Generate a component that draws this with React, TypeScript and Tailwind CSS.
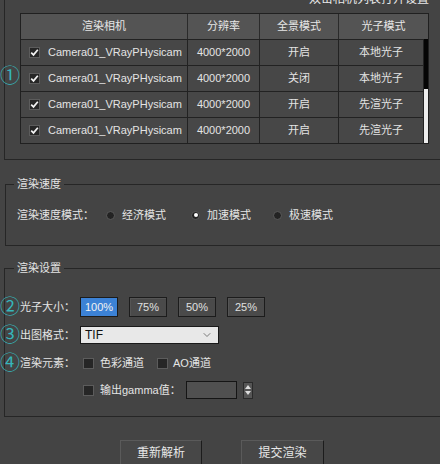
import { ChevronDown } from 'lucide-react';

const FONT = { fontFamily: '"Liberation Sans", "Noto Sans CJK SC", sans-serif' };

const cameras = [
  { name: 'Camera01_VRayPHysicam', res: '4000*2000', pano: '开启', photon: '本地光子' },
  { name: 'Camera01_VRayPHysicam', res: '4000*2000', pano: '关闭', photon: '本地光子' },
  { name: 'Camera01_VRayPHysicam', res: '4000*2000', pano: '开启', photon: '先渲光子' },
  { name: 'Camera01_VRayPHysicam', res: '4000*2000', pano: '开启', photon: '先渲光子' },
];

function CheckBox({ checked }: { checked?: boolean }) {
  return (
    <span className="flex w-[11px] h-[11px] shrink-0 items-center justify-center border border-[#5c5c5c] bg-[#262626]">
      {checked && (
        <svg width="9" height="9" viewBox="0 0 9 9">
          <path d="M1.2 4.6 L3.5 6.9 L7.8 1.8" fill="none" stroke="#f2f2f2" strokeWidth="1.7" />
        </svg>
      )}
    </span>
  );
}

function Radio({ checked, label }: { checked?: boolean; label: string }) {
  return (
    <div className="flex items-center">
      <span className="flex w-[9px] h-[9px] items-center justify-center rounded-full border border-[#5a5a5a] bg-[#232323]">
        {checked && <span className="w-[4px] h-[4px] rounded-full bg-white" />}
      </span>
      <span className="ml-[7px]">{label}</span>
    </div>
  );
}

function Circled({ ch, top }: { ch: string; top: string }) {
  return (
    <span
      className={`absolute left-0 ${top} text-[20px] leading-none text-[#36b6bb]`}
      style={{ fontFamily: '"Noto Sans CJK SC", sans-serif' }}
    >
      {ch}
    </span>
  );
}

export default function App() {
  return (
    <div
      className="relative w-[440px] h-[464px] overflow-hidden bg-[#444444] text-[11px] text-[#e4e4e4]"
      style={FONT}
    >
      {/* camera list */}
      <div className="ml-[4px] w-[460px] h-[168px] border-l border-b border-[#262626]">
        <div className="h-[13px] pl-[304px] leading-[14px] -mt-[8px] text-[12px] text-[#e8e8e8]">双击相机列表打开设置</div>
        <div className="ml-[15px] mt-[8px] w-[409px] border border-[#202020]">
          <div className="flex h-[25px] bg-[#545454] text-[#e6e6e6]">
            <div className="flex w-[167px] items-center justify-center border-r border-[#2a2a2a]">渲染相机</div>
            <div className="flex w-[72px] items-center justify-center border-r border-[#2a2a2a]">分辨率</div>
            <div className="flex w-[79px] items-center justify-center border-r border-[#2a2a2a]">全景模式</div>
            <div className="flex flex-1 items-center justify-center">光子模式</div>
          </div>
          <div className="flex">
            <div className="flex-1">
              {cameras.map((c, i) => (
                <div key={i} className="flex h-[26px] border-t border-[#222222] bg-[#474747]">
                  <div className="flex w-[167px] items-center gap-[8px] pl-[8px] border-r border-[#222222]">
                    <CheckBox checked />
                    <span>{c.name}</span>
                  </div>
                  <div className="flex w-[72px] items-center justify-center border-r border-[#222222]">{c.res}</div>
                  <div className="flex w-[79px] items-center justify-center border-r border-[#222222]">{c.pano}</div>
                  <div className="flex flex-1 items-center justify-center border-r border-[#222222]">{c.photon}</div>
                </div>
              ))}
            </div>
            <div className="flex w-[4px] flex-col">
              <div className="h-[50px] bg-[#050505]" />
              <div className="flex-1 bg-[#eeeeee]" />
            </div>
          </div>
        </div>
      </div>

      {/* render speed */}
      <fieldset className="ml-[5px] mt-[17px] w-[460px] h-[69px] border border-[#262626]">
        <legend className="ml-[8px] px-[3px] leading-[14px] text-[#e4e4e4]">渲染速度</legend>
        <div className="flex items-center pl-[11px] pt-[16px] h-[32px]">
          <span>渲染速度模式：</span>
          <div className="ml-[12px]"><Radio label="经济模式" /></div>
          <div className="ml-[25px]"><Radio checked label="加速模式" /></div>
          <div className="ml-[22px]"><Radio label="极速模式" /></div>
        </div>
      </fieldset>

      {/* render settings */}
      <fieldset className="ml-[4px] mt-[15px] w-[460px] h-[156px] border border-[#262626]">
        <legend className="ml-[9px] px-[3px] leading-[14px] text-[#e4e4e4]">渲染设置</legend>
        <div className="pl-[15px] pt-[18px]">
          <div className="flex h-[28px] items-center">
            <span className="w-[60px]">光子大小：</span>
            <div className="flex gap-[11px]">
              <button className="w-[38px] h-[20px] border border-[#1c1c1c] bg-[#3c82d6] text-[#f2f2f2]">100%</button>
              <button className="w-[38px] h-[20px] border border-[#1c1c1c] bg-[#4a4a4a] text-[#e0e0e0] shadow-[inset_1px_1px_0_#555]">75%</button>
              <button className="w-[38px] h-[20px] border border-[#1c1c1c] bg-[#4a4a4a] text-[#e0e0e0] shadow-[inset_1px_1px_0_#555]">50%</button>
              <button className="w-[38px] h-[20px] border border-[#1c1c1c] bg-[#4a4a4a] text-[#e0e0e0] shadow-[inset_1px_1px_0_#555]">25%</button>
            </div>
          </div>
          <div className="flex h-[28px] items-center">
            <span className="w-[60px]">出图格式：</span>
            <div className="flex w-[139px] h-[18px] items-center justify-between border border-[#1a1a1a] bg-[#e8e8e8] pl-[4px] pr-[5px] text-[12px] text-[#111]">
              <span className="leading-none">TIF</span>
              <ChevronDown size={12} strokeWidth={1.5} color="#555" />
            </div>
          </div>
          <div className="flex h-[28px] items-center">
            <span className="w-[60px]">渲染元素：</span>
            <div className="ml-[3px] flex items-center gap-[6px]">
              <CheckBox />
              <span>色彩通道</span>
            </div>
            <div className="ml-[13px] flex items-center gap-[5px]">
              <CheckBox />
              <span>AO通道</span>
            </div>
          </div>
          <div className="flex h-[26px] items-center">
            <div className="ml-[63px] flex items-center gap-[6px]">
              <CheckBox />
              <span>输出gamma值：</span>
            </div>
            <div className="ml-[5px] w-[51px] h-[18px] border border-[#151515] bg-[#505050]" />
            <div className="ml-[6px] flex w-[10px] h-[17px] flex-col items-center justify-center gap-[2px] border border-[#2a2a2a] bg-[#555]">
              <svg width="6" height="4" viewBox="0 0 6 4"><path d="M0 4 L3 0 L6 4 Z" fill="#ddd" /></svg>
              <svg width="6" height="4" viewBox="0 0 6 4"><path d="M0 0 L3 4 L6 0 Z" fill="#ddd" /></svg>
            </div>
          </div>
        </div>
      </fieldset>

      {/* actions */}
      <div className="mt-[23px] flex text-[12px]">
        <button className="ml-[120px] w-[82px] h-[26px] border-t border-l border-[#5a5a5a] border-r-[#1c1c1c] border-b-[#1c1c1c] border-r border-b bg-[#474747] text-[#e8e8e8]">重新解析</button>
        <button className="ml-[39px] w-[83px] h-[26px] border-t border-l border-[#5a5a5a] border-r-[#1c1c1c] border-b-[#1c1c1c] border-r border-b bg-[#474747] text-[#e8e8e8]">提交渲染</button>
      </div>

      <Circled ch="①" top="top-[65px]" />
      <Circled ch="②" top="top-[296px]" />
      <Circled ch="③" top="top-[324px]" />
      <Circled ch="④" top="top-[352px]" />
    </div>
  );
}
